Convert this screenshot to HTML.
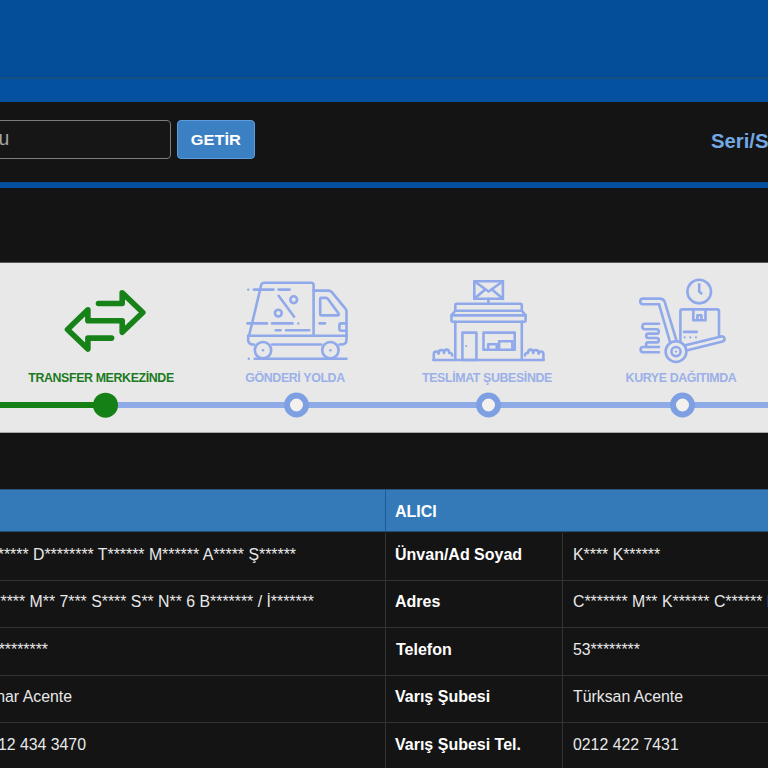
<!DOCTYPE html>
<html lang="tr">
<head>
<meta charset="utf-8">
<title>Gönderi Takip</title>
<style>
html,body{margin:0;padding:0;}
body{width:768px;height:768px;overflow:hidden;background:#141414;position:relative;
  font-family:"Liberation Sans",Arial,sans-serif;color:#fff;}
.abs{position:absolute;}
#top1{left:0;top:0;width:768px;height:77px;background:#034d99;}
#topline{left:0;top:77px;width:768px;height:2px;background:#15507e;}
#top2{left:0;top:79px;width:768px;height:23px;background:#0551a1;}
#inp{left:-200px;top:120px;width:371px;height:39px;box-sizing:border-box;border:1px solid #7d7d7d;border-radius:4px;background:#161616;}
#inptxt{right:758.6px;top:119px;height:38px;line-height:38px;font-size:19.4px;color:#a6a6a6;white-space:nowrap;}
#btn{left:177px;top:120px;width:78px;height:39px;box-sizing:border-box;border:1px solid #5e9bdc;border-radius:4px;background:#3b80c3;
  color:#fff;font-weight:bold;font-size:14.9px;line-height:38px;text-align:center;}
#btn span{display:inline-block;transform:scaleX(1.1);}
#seri{left:711px;top:129px;font-size:20.3px;font-weight:bold;color:#72a9e4;white-space:nowrap;line-height:24px;}
#bline{left:0;top:183px;width:768px;height:5px;background:#0551a1;}
#bline0{left:0;top:182px;width:768px;height:1px;background:#064a93;}
#panel{left:0;top:263px;width:768px;height:169px;background:#e8e8e8;}
#panelt{left:0;top:262px;width:768px;height:1px;background:#555;}
#panelb{left:0;top:432px;width:768px;height:1px;background:#a9a9a9;}
#panelsvg{left:0;top:262px;}
.lbl{top:371px;width:220px;text-align:center;font-weight:bold;font-size:12.4px;letter-spacing:-0.38px;line-height:14px;white-space:nowrap;color:#9bb0e8;}
#tbl{left:0;top:490px;width:768px;height:278px;}
.th{left:0;top:0;width:768px;height:41px;background:#357ab8;}
.th0{left:0;top:-1px;width:768px;height:1px;background:#2b567e;}
.th1{left:0;top:41px;width:768px;height:1px;background:#244a6b;}
.vs{background:#2a2a2a;width:1px;}
.hr{left:0;width:768px;height:1px;background:#333;}
.cell{white-space:nowrap;font-size:15.85px;line-height:20px;color:#e8e8e8;}
.b{font-weight:bold;color:#fff;font-size:16px;}
</style>
</head>
<body>
<div id="top1" class="abs"></div>
<div id="topline" class="abs"></div>
<div id="top2" class="abs"></div>

<div id="inp" class="abs"></div>
<div id="inptxt" class="abs">Gönderi Takip Kodu</div>
<div id="btn" class="abs"><span>GETİR</span></div>
<div id="seri" class="abs">Seri/Sıra No</div>
<div id="bline0" class="abs"></div>
<div id="bline" class="abs"></div>

<div id="panelt" class="abs"></div><div id="panel" class="abs"></div><div id="panelb" class="abs"></div>
<svg id="panelsvg" class="abs" width="768" height="171" viewBox="0 262 768 171">
  <!-- progress line -->
  <rect x="105" y="402" width="663" height="6" fill="#8eabe8"/>
  <rect x="0" y="402" width="106" height="6" fill="#158015"/>
  <circle cx="105.5" cy="405.2" r="12.5" fill="#158015"/>
  <g fill="#f3f1ee" stroke="#7f9fe3" stroke-width="6">
    <circle cx="296.5" cy="405" r="9.5"/>
    <circle cx="488.5" cy="405" r="9.5"/>
    <circle cx="682.5" cy="405" r="9.5"/>
  </g>

  <!-- transfer arrows -->
  <path d="M98.5 303.5 H122.2 V292.8 L142.8 312.5 L122.2 332.2 V320.8 H87.9 V309.7 L67.5 329.4 L87.9 349.1 V338.1 H111.6"
        fill="none" stroke="#178217" stroke-width="5.6" stroke-linecap="round" stroke-linejoin="round"/>

  <!-- truck -->
  <g fill="none" stroke="#90a9ea" stroke-width="2.6" stroke-linecap="round" stroke-linejoin="round">
    <path d="M249.4 334.3 L261.2 285 Q261.8 282.7 264.4 282.7 H311 Q313.6 282.7 313.6 285 V334.3"/>
    <path d="M313.6 290.6 H328.5 Q330.6 290.6 331.8 292.2 L345.6 308.8 Q346.5 310 346.5 311.6 V340 Q346.5 344.5 341 344.5 H339.5"/>
    <path d="M248.2 335.8 H346.5"/>
    <path d="M248.2 335.8 V340.5 Q248.2 343.5 252 344.5 H254"/>
    <path d="M272 344.5 H321.3"/>
    <circle cx="263" cy="350.2" r="8.2"/>
    <circle cx="330.4" cy="350.2" r="8.2"/>
    <path d="M254.6 358.7 H346.5"/>
    <path d="M321 297.9 H326 Q327.2 297.9 328 299 L338.6 313.6 Q339.6 315.4 337.6 315.4 H321.6 Q320.2 315.4 320.2 314 V299 Q320.2 297.9 321 297.9 Z"/>
    <path d="M346.5 323.4 H341.5 Q339.4 323.4 339.4 325.4 V328.8 Q339.4 330.8 341.5 330.8 H346.5"/>
    <path d="M319.6 323.4 H325"/>
    <path d="M253.9 289.6 H273.5 M278.6 289.6 H289.6"/>
    <path d="M247.4 323.4 H267 M272 323.4 H292.5"/>
    <path d="M275.8 330.3 H280.6 M286 330.3 H309.3"/>
    <path d="M278.6 295.8 L294 316.6"/>
    <circle cx="293.7" cy="299.7" r="3.4"/>
    <circle cx="278.3" cy="313.1" r="3.4"/>
  </g>
  <g fill="#90a9ea">
    <circle cx="248.2" cy="289.6" r="1.2"/>
    <circle cx="298.3" cy="323.4" r="1.2"/>
    <circle cx="248.8" cy="358.7" r="1.2"/>
    <circle cx="263" cy="350.2" r="1.3"/>
    <circle cx="330.4" cy="350.2" r="1.3"/>
  </g>

  <!-- shop -->
  <g fill="none" stroke="#90a9ea" stroke-width="2.6" stroke-linecap="round" stroke-linejoin="round">
    <rect x="474.3" y="281.2" width="28.6" height="17.6"/>
    <path d="M474.3 281.2 L488.6 291.5 L502.9 281.2 M474.3 298.8 L485.5 289.3 M502.9 298.8 L491.7 289.3"/>
    <path d="M488.4 298.8 V303.7"/>
    <path d="M455.3 310.7 V305.2 Q455.3 303.7 456.8 303.7 H520.2 Q521.8 303.7 521.8 305.2 V310.7"/>
    <path d="M455.3 310.7 H521.8 L525.6 315.4 H451.5 Z"/>
    <path d="M451.5 315.4 V320.2 Q451.5 321.7 453 321.7 H524 Q525.6 321.7 525.6 320.2 V315.4"/>
    <path d="M455.3 321.7 V360 M521.8 321.7 V360"/>
    <path d="M433.5 360 H543.6"/>
    <rect x="462.4" y="332.6" width="14" height="27.4"/>
    <rect x="483.5" y="332.6" width="31.2" height="17.2"/>
    <path d="M488.2 349.8 V344.3 H496.8 V349.8 M499.1 349.8 V341.2 H512.4 V349.8"/>
    <path d="M433.8 360 V354 Q433.8 351.5 436.2 351.5 Q438.5 351.5 438.5 353.8 Q438.5 350 441.3 350 Q444 350 444 353 Q444 349.6 446.6 349.6 Q449.2 349.6 449.2 353 Q452.2 352.5 452.2 355.5"/>
    <path d="M543.4 360 V354 Q543.4 351.5 541 351.5 Q538.7 351.5 538.7 353.8 Q538.7 350 535.9 350 Q533.2 350 533.2 353 Q533.2 349.6 530.6 349.6 Q528 349.6 528 353 Q525 352.5 525 355.5"/>
  </g>
  <circle cx="466.3" cy="346" r="1.1" fill="#90a9ea"/>

  <!-- hand truck -->
  <g fill="none" stroke="#90a9ea" stroke-width="2.6" stroke-linecap="round" stroke-linejoin="round">
    <circle cx="699.2" cy="291.6" r="11.8"/>
    <path d="M699.2 284.3 V291.6 L701.4 293.4"/>
    <path d="M659 304.2 H643 Q640.3 304.2 640.3 301.4 Q640.3 298.6 643 298.6 H659.6 Q663.6 298.6 664.8 302.2 L676.4 340.4"/>
    <path d="M659 304.2 L670 342"/>
    <circle cx="676" cy="351.6" r="10.4"/>
    <circle cx="676" cy="351.6" r="4.6"/>
    <path d="M684.4 345.4 L721.2 336.4 Q723.6 335.8 724.4 338.2 Q725 340.8 722.6 341.4 L686.4 350.4"/>
    <path d="M680.4 341.8 V311.4 Q680.4 309.4 682.4 309.4 H717 Q719 309.4 719 311.4 V336.8"/>
    <path d="M693.3 309.4 V320.2 H705.5 V309.4 M697.4 320.2 V315.2 H701.4 V320.2"/>
    <path d="M684 331.9 H696.8"/>
    <path d="M659 323.8 H645 Q642.3 323.8 642.3 326.5 Q642.3 329.2 645 329.2 H656.6 Q658.8 329.2 658.8 331.4 Q658.8 333.6 656.6 333.6 H648.4 Q646.2 333.6 646.2 335.8 Q646.2 338 648.4 338 H656.6 Q658.8 338 658.8 340.2 Q658.8 342.4 656.6 342.4 H648.4 Q646 342.4 646 344.7 Q646 347 648.4 347 H659"/>
    <path d="M659 352.2 H643.2 Q640.6 352.2 640.6 349.6 Q640.6 347 643.2 347 H648.4"/>
  </g>
  <g fill="#90a9ea">
    <circle cx="676" cy="351.6" r="1.2"/>
    <circle cx="684.6" cy="337.3" r="1.1"/>
    <circle cx="690.3" cy="337.3" r="1.1"/>
    <circle cx="696" cy="337.3" r="1.1"/>
  </g>
</svg>

<div class="abs lbl" style="left:-9px;color:#1b7a1f;">TRANSFER MERKEZİNDE</div>
<div class="abs lbl" style="left:185px;">GÖNDERİ YOLDA</div>
<div class="abs lbl" style="left:377px;">TESLİMAT ŞUBESİNDE</div>
<div class="abs lbl" style="left:571px;">KURYE DAĞITIMDA</div>

<div id="tbl" class="abs">
  <div class="abs th"></div><div class="abs th0"></div><div class="abs th1"></div>
  <div class="abs vs" style="left:385px;top:0;height:41px;background:#1d5a96;"></div><div class="abs vs" style="left:385px;top:42px;height:236px;background:#333;"></div>
  <div class="abs vs" style="left:562px;top:43px;height:235px;background:#333;"></div>
  <div class="abs hr" style="top:42px;background:#1a1a1a;"></div>
  <div class="abs hr" style="top:90px;"></div>
  <div class="abs hr" style="top:137px;"></div>
  <div class="abs hr" style="top:185px;"></div>
  <div class="abs hr" style="top:232px;"></div>

  <div class="abs cell b" style="left:395px;top:12px;">ALICI</div>

  <div class="abs cell b" style="left:395px;top:55px;">Ünvan/Ad Soyad</div>
  <div class="abs cell b" style="left:395px;top:102px;">Adres</div>
  <div class="abs cell b" style="left:396px;top:150px;">Telefon</div>
  <div class="abs cell b" style="left:395px;top:197px;">Varış Şubesi</div>
  <div class="abs cell b" style="left:395px;top:245px;">Varış Şubesi Tel.</div>

  <div class="abs cell" style="left:573px;top:55px;">K**** K******</div>
  <div class="abs cell" style="left:573px;top:102px;">C******* M** K****** C****** N** 1* D** 4 K******* / İ*******</div>
  <div class="abs cell" style="left:573px;top:150px;">53********</div>
  <div class="abs cell" style="left:573px;top:197px;">Türksan Acente</div>
  <div class="abs cell" style="left:573px;top:245px;">0212 422 7431</div>

  <div class="abs cell" style="right:472px;top:55px;">Y**** K******* D******** T****** M****** A***** Ş******</div>
  <div class="abs cell" style="right:454px;top:102px;">Y********* M** 7*** S**** S** N** 6 B******* / İ*******</div>
  <div class="abs cell" style="right:720px;top:150px;">21*********</div>
  <div class="abs cell" style="right:696px;top:197px;">Çınar Acente</div>
  <div class="abs cell" style="right:682px;top:245px;">0212 434 3470</div>
</div>
</body>
</html>
